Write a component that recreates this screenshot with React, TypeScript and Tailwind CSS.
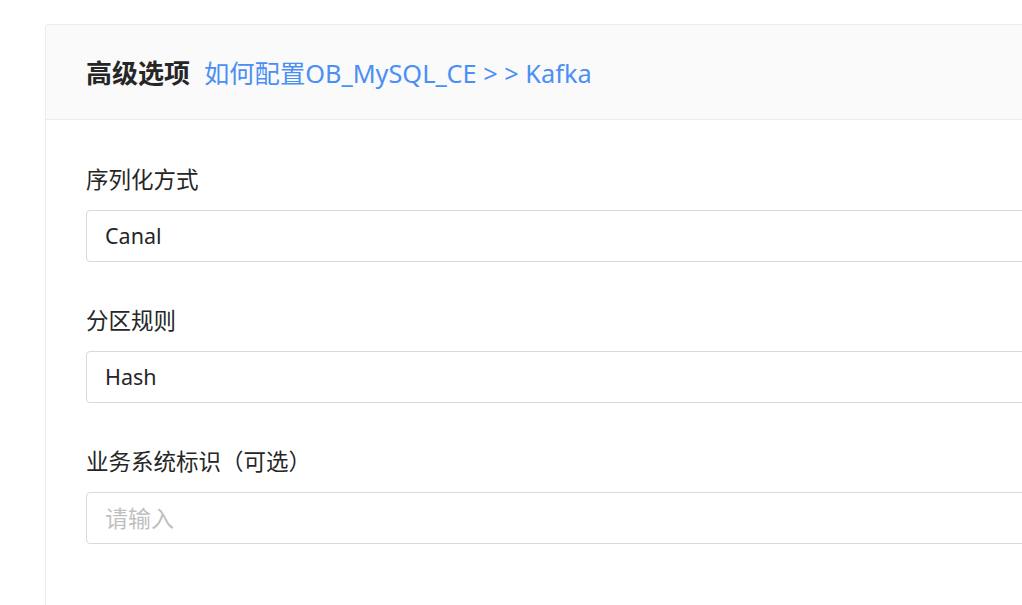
import React from "react";

const font = { fontFamily: '"Noto Sans", "Noto Sans CJK SC", sans-serif' };

interface FieldProps {
  label: string;
  value?: string;
  placeholder?: string;
}

function Field({ label, value, placeholder }: FieldProps) {
  return (
    <div className="mb-[43px]">
      <div className="text-[22.5px] leading-[32px] text-[#262626] mb-[14px]">{label}</div>
      <div className="h-[52px] w-[1000px] rounded-[4px] border border-[#d9d9d9] bg-white flex items-center px-[18px] text-[21.5px]">
        {value ? (
          <span className="text-[#262626]">{value}</span>
        ) : (
          <span className="text-[#bfbfbf] text-[23px]">{placeholder}</span>
        )}
      </div>
    </div>
  );
}

export default function App() {
  return (
    <div className="w-[1022px] h-[605px] overflow-hidden bg-white pl-[45px] pt-[24px]" style={font}>
      <div className="w-[1100px] h-[700px] border border-[#ececec] rounded-[3px] bg-white">
        <div className="h-[95px] bg-[#fafafa] border-b border-[#ececec] flex items-center px-[40px] pt-[3px]">
          <span className="text-[26px] font-bold text-[#262626]">高级选项</span>
          <a href="#" className="ml-[14px] text-[25.3px] text-[#4a8ff5]">
            如何配置OB_MySQL_CE &gt; &gt; Kafka
          </a>
        </div>
        <div className="px-[40px] pt-[44px]">
          <Field label="序列化方式" value="Canal" />
          <Field label="分区规则" value="Hash" />
          <Field label="业务系统标识（可选）" placeholder="请输入" />
        </div>
      </div>
    </div>
  );
}
